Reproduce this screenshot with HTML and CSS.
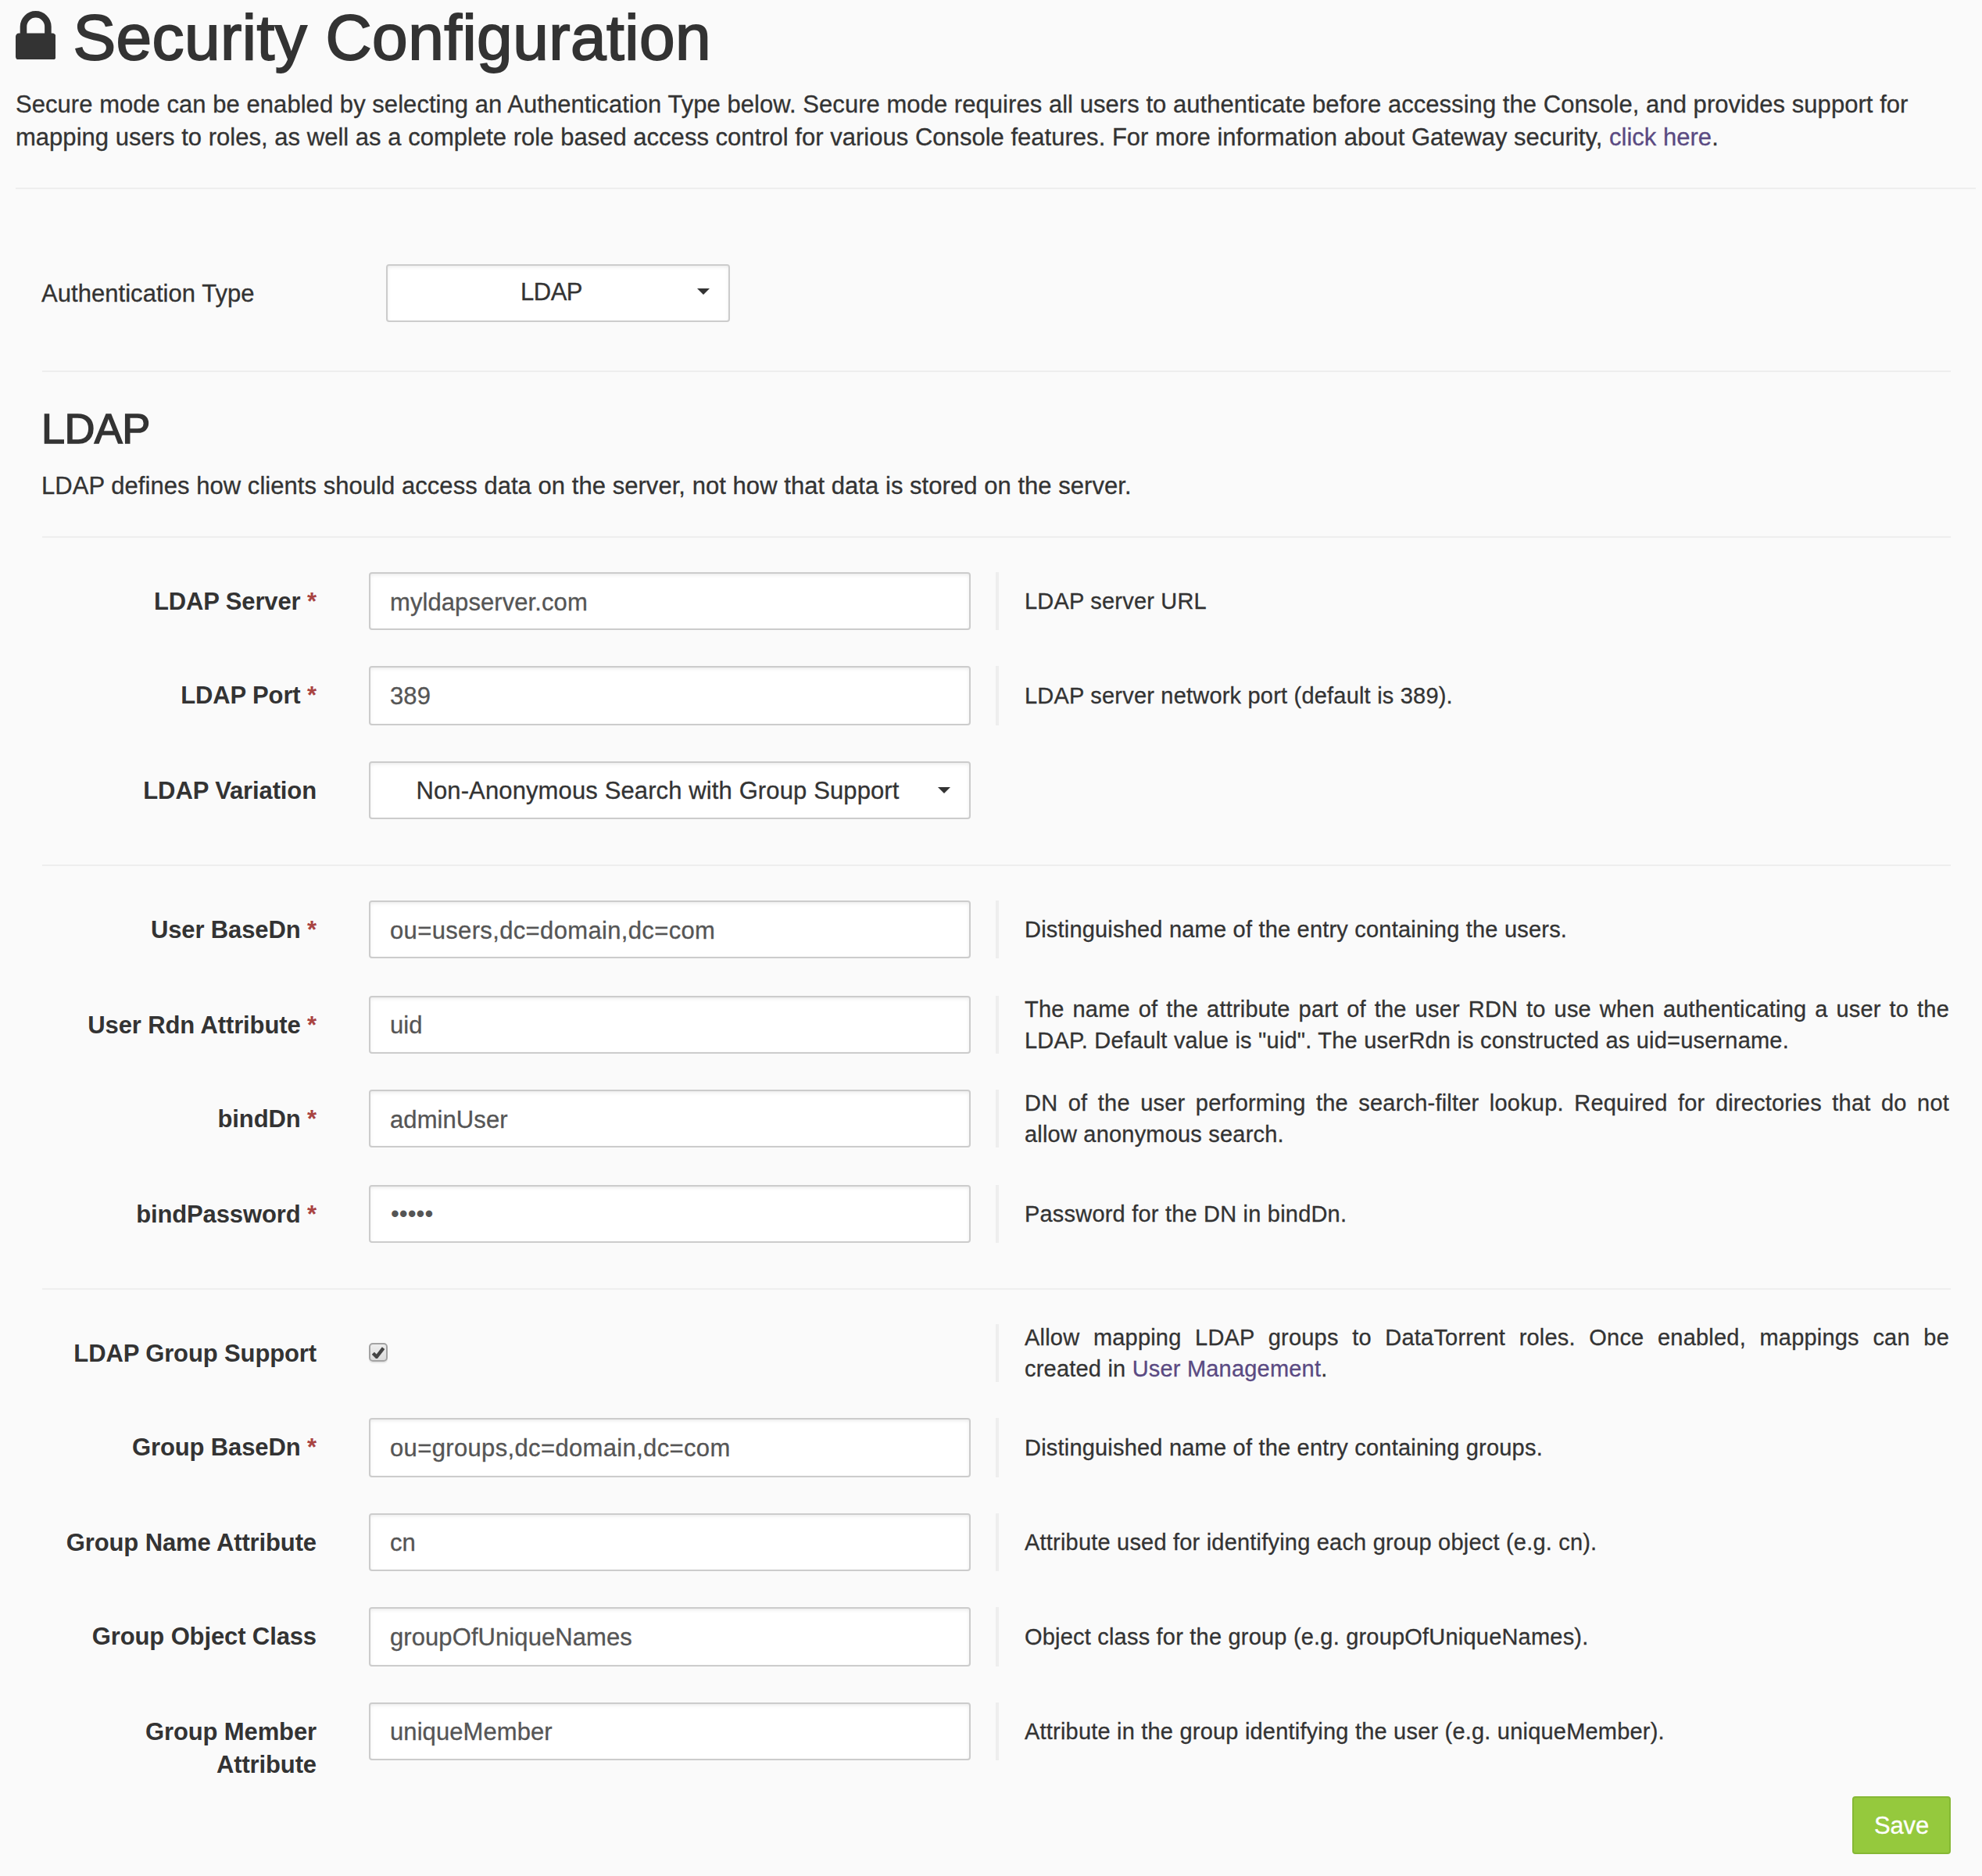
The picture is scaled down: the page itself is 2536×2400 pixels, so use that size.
FILE: index.html
```html
<!DOCTYPE html>
<html lang="en">
<head>
<meta charset="utf-8">
<title>Security Configuration</title>
<link rel="stylesheet" href="styles.css">
</head>
<body>
<main class="page">
  <header class="page-header">
    <h1 class="title">
      <svg class="lock" viewBox="0 128 1152 1408" aria-hidden="true"><path fill="currentColor" d="M320 768h512v-192q0-106-75-181t-181-75-181 75-75 181v192zm832 96v576q0 40-28 68t-68 28h-960q-40 0-68-28t-28-68v-576q0-40 28-68t68-28h32v-192q0-184 132-316t316-132 316 132 132 316v192h32q40 0 68 28t28 68z"/></svg>
      <span class="title-text">Security Configuration</span>
    </h1>
    <p class="intro"><span class="intro-line">Secure mode can be enabled by selecting an Authentication Type below. Secure mode requires all users to authenticate before accessing the Console, and provides support for</span> <span class="intro-line second">mapping users to roles, as well as a complete role based access control for various Console features. For more information about Gateway security, <a class="link">click here</a>.</span></p>
  </header>

  <form class="form">
    <section class="auth">
      <span class="auth-label">Authentication Type</span>
      <div class="select auth-select"><span class="select-text">LDAP</span><i class="caret"></i></div>
    </section>

    <section class="about">
      <h2 class="subtitle">LDAP</h2>
      <p class="about-text">LDAP defines how clients should access data on the server, not how that data is stored on the server.</p>
    </section>

    <section class="group">
      <div class="row">
        <label class="label">LDAP Server <b class="req">*</b></label>
        <input class="input low" value="myldapserver.com">
        <div class="help"><p class="help-text">LDAP server URL</p></div>
      </div>
      <div class="row tall">
        <label class="label">LDAP Port <b class="req">*</b></label>
        <input class="input" value="389">
        <div class="help"><p class="help-text">LDAP server network port (default is 389).</p></div>
      </div>
      <div class="row">
        <label class="label">LDAP Variation</label>
        <div class="select variation"><span class="select-text">Non-Anonymous Search with Group Support</span><i class="caret"></i></div>
      </div>
    </section>

    <section class="group">
      <div class="row loose">
        <label class="label">User BaseDn <b class="req">*</b></label>
        <input class="input dn low" value="ou=users,dc=domain,dc=com">
        <div class="help"><p class="help-text">Distinguished name of the entry containing the users.</p></div>
      </div>
      <div class="row">
        <label class="label">User Rdn Attribute <b class="req">*</b></label>
        <input class="input" value="uid">
        <div class="help"><p class="help-text">The name of the attribute part of the user RDN to use when authenticating a user to the LDAP. Default value is "uid". The userRdn is constructed as uid=username.</p></div>
      </div>
      <div class="row loose">
        <label class="label">bindDn <b class="req">*</b></label>
        <input class="input low" value="adminUser">
        <div class="help"><p class="help-text">DN of the user performing the search-filter lookup. Required for directories that do not allow anonymous search.</p></div>
      </div>
      <div class="row">
        <label class="label">bindPassword <b class="req">*</b></label>
        <input class="input secret" value="•••••">
        <div class="help"><p class="help-text">Password for the DN in bindDn.</p></div>
      </div>
    </section>

    <section class="group">
      <div class="row">
        <label class="label">LDAP Group Support</label>
        <div class="check-cell">
          <span class="checkbox"><svg class="check" viewBox="0 0 16 16" aria-hidden="true"><path d="M1.4 9.2 5.9 13.8 14.6 2.6" fill="none" stroke="#444" stroke-width="4.4"/></svg></span>
        </div>
        <div class="help"><p class="help-text">Allow mapping LDAP groups to DataTorrent roles. Once enabled, mappings can be created in <a class="link">User Management</a>.</p></div>
      </div>
      <div class="row tall">
        <label class="label">Group BaseDn <b class="req">*</b></label>
        <input class="input dn" value="ou=groups,dc=domain,dc=com">
        <div class="help"><p class="help-text">Distinguished name of the entry containing groups.</p></div>
      </div>
      <div class="row">
        <label class="label">Group Name Attribute</label>
        <input class="input" value="cn">
        <div class="help"><p class="help-text">Attribute used for identifying each group object (e.g. cn).</p></div>
      </div>
      <div class="row tall">
        <label class="label">Group Object Class</label>
        <input class="input" value="groupOfUniqueNames">
        <div class="help"><p class="help-text">Object class for the group (e.g. groupOfUniqueNames).</p></div>
      </div>
      <div class="row">
        <label class="label">Group Member Attribute</label>
        <input class="input" value="uniqueMember">
        <div class="help"><p class="help-text">Attribute in the group identifying the user (e.g. uniqueMember).</p></div>
      </div>
    </section>

    <footer class="actions"><button class="save" type="button">Save</button></footer>
  </form>
</main>
</body>
</html>
```
FILE: styles.css
```css
* { box-sizing: border-box; }

body {
  margin: 0;
  background: #fafafa;
  color: #333;
  font: 31px/42px "Liberation Sans", Arial, sans-serif;
  letter-spacing: .045px;
  -webkit-text-stroke: .3px currentColor;
}

h1, h2, p { margin: 0; font-weight: 400; }

.page { height: 2400px; padding: 0 8px 0 20px; overflow: hidden; }

.page-header { height: 242px; border-bottom: 2px solid #eee; }

.title {
  display: flex;
  align-items: flex-start;
  gap: 22px;
  height: 113px;
  font-size: 82px;
  line-height: 95px;
  letter-spacing: .45px;
  -webkit-text-stroke: 1.9px #333;
}

.lock { width: 51.4px; height: 62.9px; margin-top: 13.5px; }
.lock path { stroke: none; }

.intro-line { display: block; white-space: nowrap; }
.intro-line.second { letter-spacing: .02px; }

.link { color: #5a4a82; }

.form { padding: 0 32px 0 34px; }

.auth {
  display: flex;
  height: 234px;
  padding-top: 96px;
  border-bottom: 2px solid #eee;
}

.auth-label { width: 441px; margin-left: -1px; padding-top: 17px; }

.select, .input {
  display: flex;
  height: 100%;
  width: 100%;
  border: 2px solid #ccc;
  border-radius: 4px;
  background: #fff;
  box-shadow: inset 0 2px 4px rgba(0, 0, 0, .075);
}

.select { padding: 0 24px 0 26px; align-items: center; }
.select-text { flex: 1; padding-top: 2px; text-align: center; }

.auth-select { width: 440px; height: 74px; padding-bottom: 4px; }
.auth-select .select-text { padding-right: 3px; letter-spacing: -.5px; }

.variation .select-text { padding-right: 17px; letter-spacing: .12px; }

.caret {
  width: 16px;
  border: 8px solid transparent;
  border-top-color: #333;
  border-bottom: 0;
}

.about { height: 212px; padding-top: 42px; border-bottom: 2px solid #eee; }

.subtitle {
  margin-left: -1px;
  font-size: 54px;
  line-height: 61px;
  letter-spacing: -.6px;
  -webkit-text-stroke: 1.5px #333;
}

.about-text { margin-left: -1px; padding-top: 22px; white-space: nowrap; }

.group { padding: 44px 0 58px; border-bottom: 2px solid #eee; }
.group:last-of-type { padding-bottom: 0; border: 0; }

.row {
  display: grid;
  grid-template-columns: 418px 770px 32px 1222px;
  grid-template-rows: 100%;
  height: 74px;
  margin-bottom: 46px;
}
.row:last-child { margin-bottom: 0; }
.row.tall { height: 76px; }
.row.loose { margin-bottom: 48px; }

.label {
  padding: 17px 67px 0 20px;
  text-align: right;
  font-weight: 700;
  letter-spacing: -.12px;
  -webkit-text-stroke: 0;
}

.req { color: #a94442; }

.input {
  padding: 2px 25px 0;
  color: #555;
  font: inherit;
  letter-spacing: .08px;
}
.input.low { padding-top: 4px; }
.input.dn { letter-spacing: .35px; }

.secret { padding: 0 25px 0 26px; letter-spacing: 0; -webkit-text-stroke: 0; }

.check-cell { padding-top: 24px; }

.checkbox {
  display: flex;
  width: 24px;
  height: 24px;
  padding: 2px;
  border: 2px solid #a3a3a3;
  border-radius: 5px;
  background: linear-gradient(#eee, #dcdcdc);
  box-shadow: 0 2px 1px rgba(0, 0, 0, .08);
}

.check { width: 16px; height: 16px; }

.help {
  grid-column: 4;
  display: flex;
  align-items: center;
  border-left: 4px solid #eee;
  padding: 0 2px 0 33px;
  font-size: 29px;
  line-height: 40px;
  letter-spacing: .2px;
}

.help-text { width: 100%; text-align: justify; }

.actions { display: flex; justify-content: flex-end; padding-top: 46px; }

.save {
  width: 126px;
  height: 74px;
  padding: 2px 0 0;
  border: 2px solid #86b834;
  border-radius: 4px;
  background: #95c93d;
  color: #fff;
  font: inherit;
  letter-spacing: -.2px;
}
```
